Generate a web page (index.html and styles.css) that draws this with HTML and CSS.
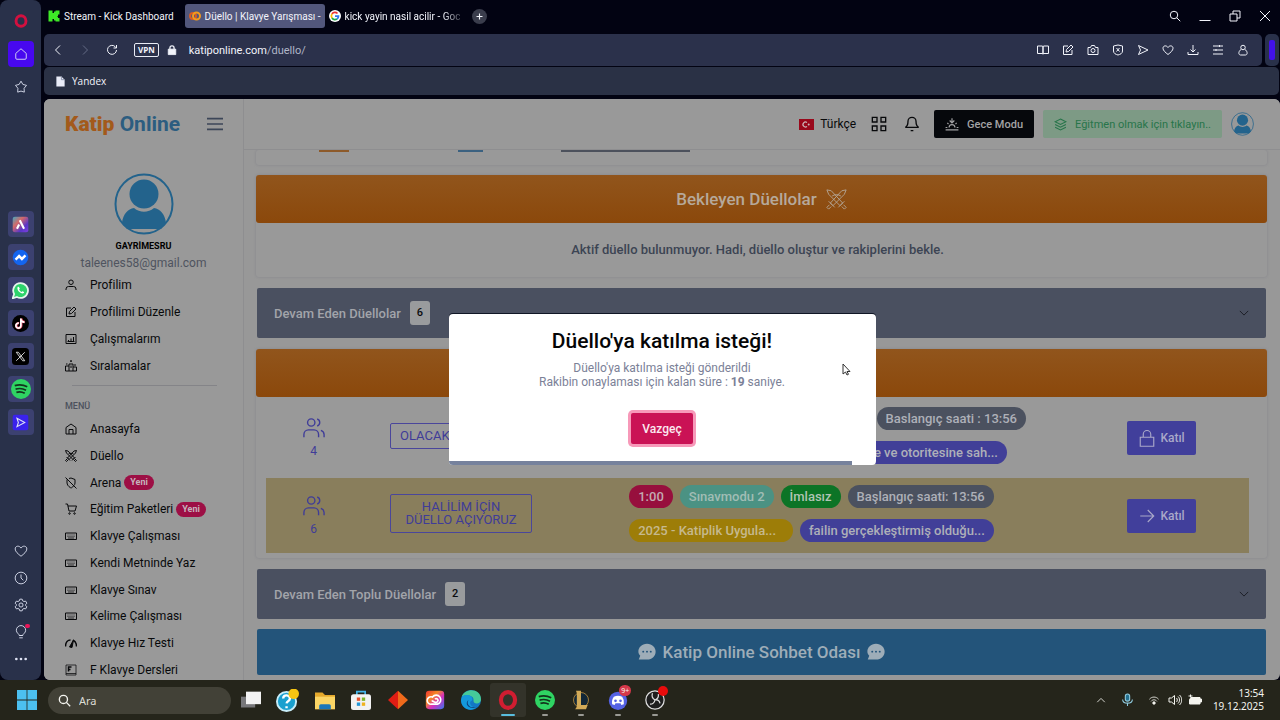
FILE: index.html
```html
<!DOCTYPE html>
<html lang="tr">
<head>
<meta charset="utf-8">
<title>Düello | Klavye Yarışması</title>
<link rel="stylesheet" href="styles.css">
</head>
<body>
<svg class="defs" aria-hidden="true">
<symbol id="home" viewBox="0 0 24 24"><path d="M3 11 12 3l9 8v8a2 2 0 0 1-2 2H5a2 2 0 0 1-2-2z"/></symbol>
<symbol id="house" viewBox="0 0 24 24"><path d="M2 9 12 2l10 7v13H2zM8 22v-9h8v9"/></symbol>
<symbol id="star" viewBox="0 0 24 24"><path d="m12 2 3.200 5.600 6.300 1.600-4.200 5 .4 6.600L12 19l-5.700 1.800.4-6.600-4.200-5 6.300-1.600z"/></symbol>
<symbol id="heart" viewBox="0 0 24 24"><path d="M12 21C7 17 2 13 2 8.500 2 3 9 2 12 7c3-5 10-4 10 1.500C22 13 17 17 12 21z"/></symbol>
<symbol id="clock" viewBox="0 0 24 24"><circle cx="12" cy="12" r="10"/><path d="M12 6v6l4 4"/></symbol>
<symbol id="gear" viewBox="0 0 24 24"><path d="m10 2h4l1 3 2 1 3-.6 2 3.500-2 2.100v2l2 2.100-2 3.500-3-.6-2 1-1 3h-4l-1-3-2-1-3 .6-2-3.500 2-2.100v-2L2 8.900l2-3.500 3 .6 2-1z"/><circle cx="12" cy="12" r="3.500"/></symbol>
<symbol id="bulb" viewBox="0 0 24 24"><path d="M9 18c0-3-5-4-5-9a8 8 0 0 1 16 0c0 5-5 6-5 9zM9 22h6M9 18h6"/></symbol>
<symbol id="left" viewBox="0 0 24 24"><path d="m16 3-9 9 9 9"/></symbol>
<symbol id="right" viewBox="0 0 24 24"><path d="m8 3 9 9-9 9"/></symbol>
<symbol id="down" viewBox="0 0 24 24"><path d="m2 7 10 10L22 7"/></symbol>
<symbol id="up" viewBox="0 0 24 24"><path d="m3 16 9-9 9 9"/></symbol>
<symbol id="reload" viewBox="0 0 24 24"><path d="M21 12a9 9 0 1 1-3-7l3 3M21 2v6h-6"/></symbol>
<symbol id="search" viewBox="0 0 24 24"><circle cx="10" cy="10" r="7.500"/><path d="m15.500 15.500 7 7"/></symbol>
<symbol id="restore" viewBox="0 0 24 24"><path d="M2 8h14v14H2zM8 8V2h14v14h-6"/></symbol>
<symbol id="close" viewBox="0 0 24 24"><path d="m2 2 20 20M22 2 2 22"/></symbol>
<symbol id="book" viewBox="0 0 24 24"><path d="M1 4h9l2 1v15l-2-1H1zM23 4h-9l-2 1v15l2-1h9z"/></symbol>
<symbol id="edit" viewBox="0 0 24 24"><path d="M12 4H3v17h17v-9M8 16l1-5 9-9 4 4-9 9z"/></symbol>
<symbol id="camera" viewBox="0 0 24 24"><path d="M2 7h5l2-4h6l2 4h5v14H2z"/><circle cx="12" cy="13" r="4"/></symbol>
<symbol id="shield" viewBox="0 0 24 24"><path d="M3 4 12 2l9 2v10c0 5-5 7-9 8-4-1-9-3-9-8zM9 8l6 7M15 8l-6 7"/></symbol>
<symbol id="send" viewBox="0 0 24 24"><path d="m3 3 19 9-19 9 4-9z"/></symbol>
<symbol id="download" viewBox="0 0 24 24"><path d="M12 2v14M7 11l5 5 5-5M2 16v5h20v-5"/></symbol>
<symbol id="tune" viewBox="0 0 24 24"><path d="M2 4h20M2 12h20M2 20h20M15 2v4M8 10v4"/></symbol>
<symbol id="person" viewBox="0 0 24 24"><circle cx="12" cy="7" r="4.500"/><path d="M8 11c-6 4-5 11-1 11h10c4 0 5-7-1-11"/></symbol>
<symbol id="user" viewBox="0 0 24 24"><circle cx="12" cy="6.500" r="4.500"/><path d="M2 22v-2a5 5 0 0 1 5-5h10a5 5 0 0 1 5 5v2"/></symbol>
<symbol id="users" viewBox="0 0 24 24"><circle cx="9" cy="6" r="4"/><path d="M1 22v-3a5 5 0 0 1 5-5h6a5 5 0 0 1 5 5v3M15.500 2.200a4 4 0 0 1 0 7.600M19.500 14.500A5 5 0 0 1 23 19v3"/></symbol>
<symbol id="chart" viewBox="0 0 24 24"><path d="M2 3h20v18H2zM7 17v-3M12 17v-6M17 17V8M5 17h14"/></symbol>
<symbol id="podium" viewBox="0 0 24 24"><path d="M1 22V12h7V8h8v6h7v8zM8 12v10M16 14v8M10 2h4M12 1v3M12 11v5M2 8h3M18 10h4"/></symbol>
<symbol id="swords" viewBox="0 0 24 24"><path d="m1 1 5 1 13 14-3 3L3 6zM23 1l-5 1L5 16l3 3L21 6zM3 14l7 7M21 14l-7 7M4 18l-3 3 2 2 3-3M20 18l3 3-2 2-3-3M7 8c3-2 7-2 10 0"/></symbol>
<symbol id="arena" viewBox="0 0 24 24"><path d="m1 1 22 22M8 3l4-1 8 3v7c0 2-1 4-2 5M4 5v7c0 6 8 10 8 10s3-1 5-4"/></symbol>
<symbol id="cart" viewBox="0 0 24 24"><path d="M1 2h4l3 14h12l3-10H6"/><circle cx="9" cy="21" r="1.500"/><circle cx="19" cy="21" r="1.500"/></symbol>
<symbol id="keyboard" viewBox="0 0 24 24"><path d="M1 6h22v13H1z"/><path stroke-width="1.500" d="M5 10h2M9 10h2M13 10h2M17 10h2M5 13h2M9 13h2M13 13h2M17 13h2M6 16h12"/></symbol>
<symbol id="gauge" viewBox="0 0 24 24"><path stroke-width="3" d="M1 19C1 10 6 6 11 6M16 6c4 2 7 6 7 13"/><path d="m9 20 8-14-3 15z" fill="currentColor"/></symbol>
<symbol id="fkey" viewBox="0 0 24 24"><path stroke-width="1.500" d="M2 2h20v20H2zM2 19h20"/><path stroke-width="3" d="M7 15V6h6M7 11h4"/></symbol>
<symbol id="menu" viewBox="0 0 24 24"><path stroke-width="2.500" d="M0 4h24M0 12h24M0 20h24"/></symbol>
<symbol id="grid" viewBox="0 0 24 24"><path d="M2 2h7v7H2zM15 2h7v7h-7zM2 15h7v7H2zM15 15h7v7h-7z"/></symbol>
<symbol id="bell" viewBox="0 0 24 24"><path d="M18 8a6 6 0 0 0-12 0c0 7-4 9-4 9h20s-4-2-4-9M10 22h4"/></symbol>
<symbol id="sunset" viewBox="0 0 24 24"><path d="M17 18a5 5 0 0 0-10 0M12 2v7M8 6l4 4 4-4M4 10l2 2M20 10l-2 2M1 18h3M20 18h3M1 22h22"/></symbol>
<symbol id="layers" viewBox="0 0 24 24"><path d="m12 2 10 5-10 5L2 7zM2 12l10 5 10-5M2 17l10 5 10-5"/></symbol>
<symbol id="avatar" viewBox="0 0 60 62"><ellipse cx="30" cy="31" rx="28.500" ry="29.500" fill="none" stroke="#23638c" stroke-width="2"/><circle cx="30" cy="21" r="14.500" fill="#23638c" stroke="none"/><path d="M8 50c1-9 6-14 12-15 6 5 14 5 20 0 6 1 11 6 12 15l-5 6H13z" fill="#23638c" stroke="none"/></symbol>
<symbol id="lock" viewBox="0 0 24 24"><path d="M3 11h18v12H3zM7 11V7a5 5 0 0 1 10 0v4"/></symbol>
<symbol id="arrow" viewBox="0 0 24 24"><path d="M3 12h18M13 4l8 8-8 8"/></symbol>
<symbol id="chat" viewBox="0 0 24 24"><path d="M12 1c7 0 11.500 5 11.500 10.500S19 22 12 22H1l2-5C1.300 15 .5 13.500.5 11.500.5 6 5 1 12 1z" fill="currentColor" stroke="none"/><g fill="#23547a" stroke="none"><circle cx="7" cy="11.500" r="1.300"/><circle cx="12" cy="11.500" r="1.300"/><circle cx="17" cy="11.500" r="1.300"/></g></symbol>
<symbol id="spotify" viewBox="0 0 24 24"><circle cx="12" cy="12" r="12" fill="#2fd463" stroke="none"/><path d="M4.500 8c5-1.500 10.500-1 15 1.300M5.500 12.200c4-1.200 9-.8 12.500 1.300M6.500 16c3.500-1 7-.6 10 1.200" stroke="#12331c" stroke-width="2"/></symbol>
</svg>

<div class="desktop">
<div class="browser">
  <aside class="dock">
    <div class="dock-group top">
      <button class="dock-item opera" aria-label="Opera"><svg viewBox="0 0 24 24"><ellipse cx="12" cy="12" rx="8.500" ry="9" stroke="#d3103f" stroke-width="5"/></svg></button>
      <button class="dock-item active" aria-label="Ana sayfa"><svg><use href="#home"/></svg></button>
      <button class="dock-item" aria-label="Yıldız"><svg><use href="#star"/></svg></button>
    </div>
    <div class="dock-group apps">
      <button class="dock-item app" aria-label="Aria"><svg viewBox="0 0 24 24"><defs><linearGradient id="aria" x2="1" y2="1"><stop stop-color="#42a8c0"/><stop offset=".35" stop-color="#d56a68"/><stop offset=".7" stop-color="#5a35c8"/><stop offset="1" stop-color="#7d40e0"/></linearGradient></defs><rect x="1" y="1" width="22" height="22" rx="3" fill="url(#aria)" stroke="none"/><path d="m7 18 3-6M11 6l6 12" stroke="#fff" stroke-width="3"/></svg></button>
      <button class="dock-item app" aria-label="Messenger"><svg viewBox="0 0 24 24"><circle cx="12" cy="12" r="11" fill="#1465ef" stroke="none"/><path d="m5 15 5-5 4 4 5-5" stroke="#fff" stroke-width="3.500"/></svg></button>
      <button class="dock-item app" aria-label="WhatsApp"><svg viewBox="0 0 24 24"><path d="M12 1.500a10.500 10.500 0 1 1-5 19.700L1 23l2-6A10.500 10.500 0 0 1 12 1.500z" fill="#2ed36b" stroke="#e6f5ee" stroke-width="2.500"/><path d="M8 7c-2 4 4 10 8 9 2-1 1-2-1-3l-2 1-3-3 1-2c-1-2-2-3-3-2z" fill="#fff" stroke="none"/></svg></button>
      <button class="dock-item app" aria-label="TikTok"><svg viewBox="0 0 24 24"><circle cx="12" cy="12" r="12" fill="#000" stroke="none"/><path d="M13 5v10a3.500 3.500 0 1 1-3-3.500M13 5c0 3 2 5 5 5" stroke="#f34b6a" stroke-width="3.500"/><path d="M12.500 5v10a3.500 3.500 0 1 1-3-3.500M12.500 5c0 3 2 5 5 5" stroke="#fff" stroke-width="2.400"/></svg></button>
      <button class="dock-item app" aria-label="X"><svg viewBox="0 0 24 24"><rect width="24" height="24" rx="5" fill="#000" stroke="none"/><path d="M6 6h3l9 12h-3zM18 6 6 18" stroke="#ddd" stroke-width="1.300"/></svg></button>
      <button class="dock-item app big" aria-label="Spotify"><svg><use href="#spotify"/></svg></button>
      <button class="dock-item app" aria-label="Player"><svg viewBox="0 0 24 24"><rect x="1" y="1" width="22" height="22" rx="3" fill="#3a22ec" stroke="none"/><path d="m7 6 11 6-11 6 2-6z"/></svg></button>
    </div>
    <div class="dock-group bottom">
      <button class="dock-item" aria-label="Favoriler"><svg><use href="#heart"/></svg></button>
      <button class="dock-item" aria-label="Geçmiş"><svg><use href="#clock"/></svg></button>
      <button class="dock-item" aria-label="Ayarlar"><svg><use href="#gear"/></svg></button>
      <button class="dock-item notice" aria-label="İpuçları"><svg><use href="#bulb"/></svg></button>
      <button class="dock-item" aria-label="Daha fazla"><svg viewBox="0 0 24 24"><g fill="currentColor" stroke="none"><circle cx="4" cy="12" r="2.300"/><circle cx="12" cy="12" r="2.300"/><circle cx="20" cy="12" r="2.300"/></g></svg></button>
    </div>
  </aside>

  <div class="window">
    <div class="tabs">
      <button class="tab"><svg viewBox="0 0 24 24"><path d="M1 1h8v5h3V3h3V1h8v8h-3v3h-2v1h2v3h3v7h-8v-2h-3v-3H9v5H1z" fill="#3eea27" stroke="none"/></svg><span>Stream - Kick Dashboard</span></button>
      <button class="tab current"><svg viewBox="0 0 24 24"><g fill="none" stroke-width="4"><circle cx="8" cy="12" r="6" stroke="#d95b24"/><circle cx="15" cy="12" r="7" stroke="#f59b1c"/></g></svg><span>Düello | Klavye Yarışması -</span></button>
      <button class="tab third"><svg viewBox="0 0 24 24"><circle cx="12" cy="12" r="12" fill="#fff" stroke="none"/><g fill="none" stroke-width="3.500"><path d="M6 8a7 7 0 0 1 11-1" stroke="#e33"/><path d="M6 8a7 7 0 0 0 0 8" stroke="#fb0"/><path d="M6 16a7 7 0 0 0 10 2" stroke="#2a4"/><path d="M16 18a7 7 0 0 0 3-6h-7" stroke="#37e"/></g></svg><span>kick yayin nasil acilir - Goc</span></button>
      <button class="newtab" aria-label="Yeni sekme"><svg viewBox="0 0 24 24"><path d="M12 4v16M4 12h16"/></svg></button>
      <div class="wincontrols">
        <button aria-label="Ara"><svg><use href="#search"/></svg></button>
        <button aria-label="Küçült"><svg viewBox="0 0 24 24"><path d="M1 21h22"/></svg></button>
        <button aria-label="Geri yükle"><svg><use href="#restore"/></svg></button>
        <button aria-label="Kapat"><svg><use href="#close"/></svg></button>
      </div>
    </div>
    <div class="toolbar">
      <div class="address">
        <button aria-label="Geri"><svg><use href="#left"/></svg></button>
        <button class="dim" aria-label="İleri"><svg><use href="#right"/></svg></button>
        <button aria-label="Yenile"><svg><use href="#reload"/></svg></button>
        <span class="vpn">VPN</span>
        <svg class="padlock" viewBox="0 0 24 24"><path d="M3 10h18v13H3z" fill="currentColor"/><path d="M7 11V7a5 5 0 0 1 10 0v4" stroke-width="3"/></svg>
        <span class="url">katiponline.com<i>/duello/</i></span>
        <div class="actions">
          <button aria-label="Okuma"><svg><use href="#book"/></svg></button>
          <button aria-label="Düzenle"><svg><use href="#edit"/></svg></button>
          <button aria-label="Ekran görüntüsü"><svg><use href="#camera"/></svg></button>
          <button aria-label="Koruma"><svg><use href="#shield"/></svg></button>
          <button aria-label="Gönder"><svg><use href="#send"/></svg></button>
          <button aria-label="Beğen"><svg><use href="#heart"/></svg></button>
          <button aria-label="İndir"><svg><use href="#download"/></svg></button>
          <button aria-label="Ayarlar"><svg><use href="#tune"/></svg></button>
          <button aria-label="Profil"><svg><use href="#person"/></svg></button>
        </div>
      </div>
      <div class="side-toggle"><b></b></div>
    </div>
    <div class="bookmarks"><a href="#"><svg viewBox="0 0 24 24"><path d="M3 1h11l7 7v15H3z" fill="#e9ecf8" stroke="none"/><path d="M14 1v7h7" stroke="#8890a8"/></svg>Yandex</a></div>

    <div class="page">
      <nav class="sidebar">
        <div class="brand"><a href="#"><b>Katip</b> Online</a><button aria-label="Menü"><svg><use href="#menu"/></svg></button></div>
        <div class="profile"><svg><use href="#avatar"/></svg><strong>GAYRİMESRU</strong><span>taleenes58@gmail.com</span></div>
        <ul class="menu">
          <li><a href="#"><svg><use href="#user"/></svg>Profilim</a></li>
          <li><a href="#"><svg><use href="#edit"/></svg>Profilimi Düzenle</a></li>
          <li><a href="#"><svg><use href="#chart"/></svg>Çalışmalarım</a></li>
          <li><a href="#"><svg><use href="#podium"/></svg>Sıralamalar</a></li>
        </ul>
        <hr>
        <h2>MENÜ</h2>
        <ul class="menu main-menu">
          <li><a href="#"><svg><use href="#house"/></svg>Anasayfa</a></li>
          <li><a href="#"><svg><use href="#swords"/></svg>Düello</a></li>
          <li><a href="#"><svg><use href="#arena"/></svg>Arena<em>Yeni</em></a></li>
          <li><a href="#"><svg><use href="#cart"/></svg>Eğitim Paketleri<em>Yeni</em></a></li>
          <li><a href="#"><svg><use href="#keyboard"/></svg>Klavye Çalışması</a></li>
          <li><a href="#"><svg><use href="#keyboard"/></svg>Kendi Metninde Yaz</a></li>
          <li><a href="#"><svg><use href="#keyboard"/></svg>Klavye Sınav</a></li>
          <li><a href="#"><svg><use href="#keyboard"/></svg>Kelime Çalışması</a></li>
          <li><a href="#"><svg><use href="#gauge"/></svg>Klavye Hız Testi</a></li>
          <li><a href="#"><svg><use href="#fkey"/></svg>F Klavye Dersleri</a></li>
        </ul>
      </nav>

      <div class="main">
        <header class="topbar">
          <button class="lang"><svg viewBox="0 0 15 11"><rect width="15" height="11" fill="#99081b" stroke="none"/><path d="M8 3.500a2.500 2.500 0 1 0 0 4" stroke="#ccb5b8" stroke-width="1.200"/><circle cx="9.700" cy="5.500" r="1" fill="#ccb5b8" stroke="none"/></svg>Türkçe</button>
          <button class="icon" aria-label="Uygulamalar"><svg><use href="#grid"/></svg></button>
          <button class="icon" aria-label="Bildirimler"><svg><use href="#bell"/></svg></button>
          <button class="night"><svg><use href="#sunset"/></svg>Gece Modu</button>
          <button class="teacher"><svg><use href="#layers"/></svg>Eğitmen olmak için tıklayın..</button>
          <button class="me" aria-label="Hesap"><svg><use href="#avatar"/></svg></button>
        </header>
        <div class="content">
          <section class="card stub"><i class="orange"></i><i class="blue"></i><i class="grey"></i></section>
          <section class="card">
            <h3 class="bar orange">Bekleyen Düellolar<svg><use href="#swords"/></svg></h3>
            <p>Aktif düello bulunmuyor. Hadi, düello oluştur ve rakiplerini bekle.</p>
          </section>
          <button class="fold">Devam Eden Düellolar<span>6</span><svg><use href="#down"/></svg></button>
          <section class="card">
            <h3 class="bar orange"></h3>
            <div class="rows">
              <div class="duel">
                <div class="count"><svg><use href="#users"/></svg>4</div>
                <div class="name"><div class="title cut">OLACAK</div></div>
                <div class="tags cut">
                  <div class="line first"><span class="tag slate">Baslangıç saati : 13:56</span></div>
                  <div class="line second"><span class="tag indigo">e ve otoritesine sah...</span></div>
                </div>
                <div><button class="join"><svg><use href="#lock"/></svg>Katıl</button></div>
              </div>
              <div class="duel gold">
                <div class="count"><svg><use href="#users"/></svg>6</div>
                <div class="name"><div class="title">HALİLİM İÇİN<br>DÜELLO AÇIYORUZ</div></div>
                <div class="tags">
                  <div class="line"><span class="tag red">1:00</span><span class="tag teal">Sınavmodu 2</span><span class="tag green">İmlasız</span><span class="tag slate">Başlangıç saati: 13:56</span></div>
                  <div class="line"><span class="tag yellow">2025 - Katiplik Uygula...</span><span class="tag indigo">failin gerçekleştirmiş olduğu...</span></div>
                </div>
                <div><button class="join"><svg><use href="#arrow"/></svg>Katıl</button></div>
              </div>
            </div>
          </section>
          <button class="fold">Devam Eden Toplu Düellolar<span>2</span><svg><use href="#down"/></svg></button>
          <h3 class="bar chatbar"><svg><use href="#chat"/></svg>Katip Online Sohbet Odası<svg><use href="#chat"/></svg></h3>
        </div>
      </div>

      <div class="overlay">
        <div class="modal" role="dialog" aria-labelledby="modal-title">
          <h1 id="modal-title">Düello'ya katılma isteği!</h1>
          <p>Düello'ya katılma isteği gönderildi<br>Rakibin onaylaması için kalan süre : <b>19</b> saniye.</p>
          <button>Vazgeç</button>
          <div class="progress"><i></i></div>
          <svg class="cursor" viewBox="0 0 9 13"><path d="M1 1v10l2.500-2 1.500 3 1.500-.7L5 8.500h3z" fill="#fff" stroke="#333" stroke-width="1"/></svg>
        </div>
      </div>
    </div>
  </div>
</div>

<footer class="taskbar">
  <button class="start" aria-label="Başlat"><svg viewBox="0 0 24 24"><path d="M0 0h11.500v11.500H0zM12.500 0H24v11.500H12.500zM0 12.500h11.500V24H0zM12.500 12.500H24V24H12.500z" fill="#4cc0f0" stroke="none"/></svg></button>
  <label class="find"><svg><use href="#search"/></svg><input type="text" placeholder="Ara" aria-label="Ara"></label>
  <div class="pins">
    <button aria-label="Görev görünümü"><svg viewBox="0 0 24 24"><rect x="0" y="8" width="17" height="13" fill="#77777a" stroke="none"/><rect x="6" y="2" width="18" height="15" fill="#f3f3f3" stroke="none"/></svg></button>
    <button aria-label="Yardım"><svg class="help" viewBox="0 0 24 24"><circle cx="11" cy="13" r="10" fill="#1aa0cf" stroke="#c8edf9" stroke-width="2"/><path d="M7.500 10c0-5 7-4 7 0 0 3-3 2-3.500 5M11 18v2" stroke="#fff" stroke-width="2.500"/><circle cx="18.500" cy="5" r="5.500" fill="#f6c512" stroke="none"/></svg></button>
    <button aria-label="Dosya Gezgini"><svg viewBox="0 0 24 24"><path d="M0 3h9l3 3h12v17H0z" fill="#e5a92c" stroke="none"/><path d="M0 8h24v15H0z" fill="#fbd565" stroke="none"/><path d="M5 23v-4q0-2 2-2h10q2 0 2 2v4z" fill="#1c76b9" stroke="none"/></svg></button>
    <button aria-label="Mağaza"><svg viewBox="0 0 24 24"><path d="M7 7V2h10v5" stroke="#43b5ea"/><rect x="0" y="5" width="24" height="19" rx="3" fill="#f2f2f2" stroke="none"/><path d="M7 9h4v4H7z" fill="#e8502c" stroke="none"/><path d="M13 9h4v4h-4z" fill="#7bb52a" stroke="none"/><path d="M7 15h4v4H7z" fill="#2497d8" stroke="none"/><path d="M13 15h4v4h-4z" fill="#efb21d" stroke="none"/></svg></button>
    <button aria-label="Uygulama"><svg viewBox="0 0 24 24"><path d="M12 1 0 12l12 11z" fill="#df1d14" stroke="none"/><path d="M12 1 24 12 12 23z" fill="#ef6a1b" stroke="none"/></svg></button>
    <button aria-label="Creative Cloud"><svg viewBox="0 0 24 24"><defs><linearGradient id="cc" x2="1" y2="1"><stop stop-color="#e33"/><stop offset=".35" stop-color="#f58a24"/><stop offset=".6" stop-color="#d72fbf"/><stop offset="1" stop-color="#3278ee"/></linearGradient></defs><rect x="1" y="1" width="22" height="22" rx="4" fill="url(#cc)" stroke="none"/><path d="M8 17a4.500 4.500 0 1 1 1-8.500 5.500 5.500 0 1 1 6 8.500zM8 13c3 0 4 4 7 1a2 2 0 0 0-3-3" stroke="#fff"/></svg></button>
    <button aria-label="Edge"><svg viewBox="0 0 24 24"><circle cx="12" cy="12" r="12" fill="#1378c4" stroke="none"/><path d="M1 8C5-3 24-2 24 11c0 6-9 7-9 2 1-7-9-8-14-5z" fill="#45ca9a" stroke="none"/><path d="M1 8c7-5 15 0 12 5-4 1-2 8 5 8-7 6-18 1-18-9z" fill="#1499db" stroke="none"/><path d="M9 12c-3 4 1 11 10 8-8 5-16-3-10-8z" fill="#0c3d78" stroke="none"/></svg></button>
    <button class="running open" aria-label="Opera"><svg viewBox="0 0 24 24"><ellipse cx="12" cy="12" rx="8.500" ry="9.500" stroke="#d01d31" stroke-width="5"/></svg></button>
    <button class="running" aria-label="Spotify"><svg><use href="#spotify"/></svg></button>
    <button class="running" aria-label="League of Legends"><svg viewBox="0 0 24 24"><circle cx="12" cy="12" r="9" fill="#122737" stroke="#b98d3f" stroke-width="1"/><path d="M6 1h6v17h8l-2 5H5l2-3V4z" fill="#d2aa58" stroke="none"/></svg></button>
    <button class="running" aria-label="Discord"><svg viewBox="0 0 24 24"><circle cx="12" cy="13" r="11" fill="#5562e4" stroke="none"/><path d="M7 8q5-2 10 0 3 4 2 9l-3 1-1-2H9l-1 2-3-1q-1-5 2-9z" fill="#fff" stroke="none"/><g fill="#5562e4" stroke="none"><circle cx="9" cy="13" r="1.600"/><circle cx="15" cy="13" r="1.600"/></g></svg><small>9+</small></button>
    <button class="running rec" aria-label="OBS"><svg viewBox="0 0 24 24"><circle cx="12" cy="12" r="11" fill="#1e1e1e" stroke="#ddd" stroke-width="1.500"/><path d="M9 4q-2 5 3 8 5-1 6 4M12 12q-1 5-6 5M12 12q5-2 4-7" stroke="#ddd" stroke-width="1.500"/></svg></button>
  </div>
  <div class="tray">
    <svg><use href="#up"/></svg>
    <svg class="mic" viewBox="0 0 24 24"><rect x="8" y="1" width="8" height="13" rx="4" fill="#24708f"/><path d="M3 11c0 9 18 9 18 0M12 18v5"/></svg>
    <svg viewBox="0 0 24 24"><path d="M1 9c6-7 16-7 22 0M5 14c4-5 10-5 14 0"/><circle cx="12" cy="18" r="3" fill="currentColor"/></svg>
    <svg class="wide" viewBox="0 0 28 24"><path d="M2 8h5l6-5v18l-6-5H2zM17 8c2 2 2 6 0 8M20 5c4 4 4 10 0 14M23 2c6 6 6 14 0 20"/></svg>
    <svg class="wide" viewBox="0 0 28 24"><path d="M6 7h18v3h3v6h-3v4H3V11z" fill="currentColor"/><path d="M5 1v6M1 4h8"/></svg>
    <time>13:54<br>19.12.2025</time>
  </div>
</footer>
</div>
</body>
</html>
```
FILE: styles.css
```css
* { box-sizing: border-box; }
body { margin: 0; background: #020312; font-family: Roboto, sans-serif; font-size: 13px; color: #08090b; }
button { font: inherit; color: inherit; background: none; border: 0; padding: 0; display: flex; align-items: center; justify-content: center; cursor: pointer; }
a { color: inherit; text-decoration: none; }
h1, h2, h3, p, ul { margin: 0; padding: 0; }
svg { width: 14px; height: 14px; flex: none; display: block; fill: none; stroke: currentColor; stroke-width: 2; }
.defs { position: absolute; width: 0; height: 0; }

.desktop { height: 100vh; display: flex; flex-direction: column; }
.browser { flex: 1; min-height: 0; display: flex; gap: 3px; }

/* Opera dock */
.dock { width: 41px; flex: none; background: #29314a; border-radius: 8px; display: flex; flex-direction: column; align-items: center; padding: 8px 0 8px; color: #dfe3f4; }
.dock-group { display: flex; flex-direction: column; gap: 7px; }
.dock-group.apps { margin-top: 111px; }
.dock-group.bottom { margin-top: auto; gap: 1px; }
.dock-item { width: 26px; height: 26px; border-radius: 4px; position: relative; }
.dock-item svg { stroke-width: 1.500; }
.dock-item.active { background: #4708ef; }
.dock-item.app { background: #3c4170; }
.app svg { width: 17px; height: 17px; }
.app.big svg { width: 20px; height: 20px; }
.notice::after { content: ""; position: absolute; top: 5px; right: 4px; width: 5px; height: 4px; border-radius: 2px; background: #ea1659; }

/* Browser chrome */
.window { flex: 1; min-width: 0; display: flex; flex-direction: column; color: #f2f4fb; font-family: "Open Sans", sans-serif; font-size: 10px; }
.tabs { height: 34px; display: flex; align-items: center; padding: 0 9px 2px 4px; font-family: Roboto, sans-serif; }
.tab { height: 24px; gap: 4px; border-radius: 3px; white-space: nowrap; min-width: 125px; justify-content: flex-start; }
.tab svg { width: 12px; height: 12px; }
.tab.current { background: #52577c; min-width: 140px; margin-left: 11px; padding: 0 4px; }
.tab.third { margin-left: 4px; min-width: 132px; }
.tab.third span { mask-image: linear-gradient(90deg, #000 85%, #0004); }
.newtab { width: 15px; height: 15px; border-radius: 50%; background: #3a3d4c; margin-left: 11px; }
.newtab svg { width: 9px; height: 9px; stroke-width: 3; }
.wincontrols { margin-left: auto; display: flex; gap: 18px; }
.wincontrols svg { width: 12px; height: 12px; }
.toolbar { display: flex; gap: 3px; height: 32px; }
.address { flex: 1; background: #2b314b; border-radius: 5px; display: flex; align-items: center; padding: 0 12px 0 7px; }
.address > button { width: 14px; margin-right: 13px; }
.address svg { width: 12px; height: 12px; }
.address .dim { color: #646b86; }
.vpn { border: 1px solid #e8ebf5; border-radius: 2px; font-size: 8px; font-weight: bold; line-height: 12px; padding: 0 3px; margin-left: 2px; }
.address .padlock { width: 10px; margin: 0 12px 0 8px; }
.url { font-family: Roboto, sans-serif; font-size: 11px; }
.url i { font-style: normal; color: #b0b6c8; }
.actions { margin-left: auto; display: flex; gap: 11px; }
.actions button { width: 14px; }
.side-toggle { width: 14px; margin-right: 1px; border-radius: 5px; background: #29314a; display: flex; align-items: center; justify-content: center; }
.side-toggle b { width: 6px; height: 20px; border-radius: 2px; background: #4212ea; }
.bookmarks { height: 28px; margin: 1px 1px 4px 0; background: #2a3145; border-radius: 5px; display: flex; align-items: center; padding-left: 11px; }
.bookmarks a { display: flex; align-items: center; gap: 6px; }
.bookmarks svg { width: 11px; height: 13px; }

/* Site */
.page { flex: 1; min-height: 0; position: relative; display: flex; background: #989898; border-radius: 6px; overflow: hidden; font-family: Roboto, sans-serif; font-size: 13px; color: #08090b; }
.sidebar { width: 200px; flex: none; display: flex; flex-direction: column; border-right: 1px solid #8e8e90; background: #999; }
.brand { display: flex; align-items: center; justify-content: space-between; padding: 0 20px 0 21px; height: 50px; margin-bottom: 1px; flex: none; font-size: 21px; font-weight: 700; color: #2c5d80; }
.brand b { color: #a35a1b; }
.brand svg { width: 16px; height: 16px; color: #3c4658; }
.profile { display: flex; flex-direction: column; align-items: center; padding-top: 23px; flex: none; }
.profile svg { width: 60px; height: 62px; }
.profile strong { font-size: 9px; line-height: 12px; margin-top: 5px; color: #000; }
.profile span { color: #4f545f; line-height: 16px; margin-top: 3px; font-size: 12px; }
.menu { list-style: none; display: flex; flex-direction: column; padding: 0 0 0 21px; flex: none; font-size: 12px; }
.menu a { display: flex; align-items: center; height: 27px; }
.menu svg { width: 12px; height: 12px; margin-right: 13px; }
.menu em { font-style: normal; font-size: 9px; font-weight: 700; line-height: 15px; padding: 0 6px; border-radius: 8px; background: #9d0f45; color: #c6b4bd; margin-left: 3px; }
.sidebar hr { border: 0; border-top: 1px solid #848488; margin: 6px 26px 0 28px; }
.sidebar h2 { font-size: 9px; font-weight: 500; line-height: 14px; color: #4c515d; margin: 13px 0 3px 21px; }
.main-menu { flex: 1 1 0; min-height: 0; justify-content: space-between; margin-bottom: -3px; }
.main-menu a { height: 26px; }
.main { flex: 1; min-width: 0; display: flex; flex-direction: column; }
.topbar { height: 51px; flex: none; display: flex; align-items: center; justify-content: flex-end; padding-right: 26px; background: #999; border-bottom: 1px solid #8e8e90; font-size: 12px; }
.topbar .lang { gap: 6px; margin-right: 15px; }
.lang svg { width: 15px; height: 11px; }
.topbar .icon { margin-right: 17px; }
.topbar .icon svg { width: 16px; height: 16px; }
.night, .teacher { height: 28px; border-radius: 2px; gap: 8px; padding: 0 11px; font-size: 11px; }
.night { background: #06080c; color: #a3a3a5; margin-left: -3px; font-weight: 500; }
.teacher { background: #7d9a85; color: #27754a; margin: 0 9px; }
.teacher svg { width: 13px; height: 13px; }
.me svg { width: 23px; height: 24px; }
.content { flex: 1; min-height: 0; overflow: hidden; padding: 0 13px 0 12px; display: flex; flex-direction: column; gap: 11px; }
.card { flex: none; border-radius: 3px; background: #999; box-shadow: 0 0 3px #85858b; }
.card.stub { height: 15px; display: flex; margin-bottom: -1px; padding-left: 63px; }
.stub i { height: 2px; }
.stub .orange { width: 30px; background: #8d5a2a; }
.stub .blue { width: 25px; margin-left: 109px; background: #3b6180; }
.stub .grey { width: 129px; margin-left: 78px; background: #4c515c; }
.bar { height: 48px; display: flex; align-items: center; justify-content: center; gap: 9px; border-radius: 3px; font-size: 17px; font-weight: 500; color: #b6a99b; }
.bar svg { width: 21px; height: 21px; stroke-width: 1; }
.bar.orange { background: linear-gradient(#91551c, #8b480b); }
.card p { text-align: center; line-height: 54px; font-size: 13px; font-weight: 500; color: #3c4453; padding-right: 8px; }
.fold { flex: none; height: 50px; margin: 0 1px; padding: 0 17px; justify-content: flex-start; background: #4a5060; border-radius: 2px; font-weight: 500; color: #a2a4aa; }
.fold span { margin-left: 9px; width: 20px; line-height: 24px; font-size: 11px; border-radius: 3px; background: #999b9d; color: #0b0c0f; text-align: center; }
.fold svg { width: 10px; height: 10px; margin-left: auto; color: #14161c; }
.rows { padding: 2px 18px 5px 10px; }
.duel { display: grid; grid-template-columns: 95fr 200fr 513fr 175fr; align-items: center; justify-items: center; min-height: 77px; margin-bottom: 2px; }
.duel.gold { background: #897e5c; min-height: 75px; margin-bottom: 0; }
.count { color: #3f3c98; text-align: center; font-size: 12px; line-height: 16px; }
.count svg { width: 22px; height: 22px; margin-bottom: 4px; stroke-width: 1.500; }
.name { padding-bottom: 4px; }
.title { width: 142px; border: 1px solid #4a469b; border-radius: 2px; text-align: center; color: #3f3c98; font-size: 13px; line-height: 13px; padding: 5px 0 6px; }
.title.cut { text-align: left; padding-left: 9px; }
.tags { display: flex; flex-direction: column; gap: 11px; padding: 0 12px 4px 0; }
.tags.cut { justify-self: stretch; padding-right: 0; }
.line { display: flex; gap: 7px; justify-content: center; }
.line.first { justify-content: flex-end; padding-right: 48px; }
.line.second { justify-content: flex-end; padding-right: 67px; }
.tag { line-height: 23px; padding: 0 9px; border-radius: 12px; font-weight: 500; white-space: nowrap; color: #aeb0b8; }
.slate { background: #4b515f; }
.indigo { background: #413f98; }
.red { background: #970f3d; color: #c4aab2; }
.teal { background: #4b9283; color: #a1bdb5; }
.green { background: #0c7426; color: #b0c5b4; }
.yellow { background: #9d7d08; color: #c6b98e; padding-right: 17px; }
.join { width: 69px; height: 34px; gap: 4px; border-radius: 2px; background: #413f9b; color: #aaa9c9; font-size: 12px; font-weight: 500; }
.join svg { width: 18px; height: 18px; stroke-width: 1.500; }
.chatbar { flex: none; height: 46px; margin: -1px 1px 0; background: #23547a; color: #9eadb8; gap: 7px; border-radius: 2px; }
.chatbar svg { width: 18px; height: 18px; }

/* Dialog */
.overlay { position: absolute; inset: 0; display: flex; align-items: center; justify-content: center; }
.modal { position: relative; width: 427px; background: #fff; border-radius: 4px; display: flex; flex-direction: column; align-items: center; padding-top: 14px; box-shadow: 0 -1px 0 #101625; }
.modal h1 { font-size: 21px; font-weight: 500; line-height: 26px; color: #050506; }
.modal p { margin-top: 7px; text-align: center; font-size: 12px; line-height: 14px; color: #7b8197; }
.modal button { margin-top: 24px; height: 31px; padding: 0 11px; border-radius: 2px; background: #ca1255; color: #fbe7ef; font-size: 12px; font-weight: 500; box-shadow: 0 0 0 3px #f799b9; }
.progress { align-self: stretch; margin-top: 17px; height: 4px; border-radius: 0 0 4px 4px; overflow: hidden; }
.progress i { display: block; width: 403px; height: 4px; background: #76829d; }
.modal .cursor { position: absolute; left: 393px; top: 49px; width: 9px; height: 13px; }

/* Taskbar */
.taskbar { height: 40px; flex: none; background: #25251b; display: flex; align-items: center; padding: 0 16px 0 17px; color: #f4f4ef; font-family: "Noto Sans", sans-serif; font-size: 11px; }
.start svg { width: 20px; height: 20px; }
.find { width: 183px; height: 27px; margin-left: 11px; border-radius: 14px; background: #424137; display: flex; align-items: center; gap: 8px; padding: 0 10px; }
.find svg { width: 13px; height: 13px; stroke-width: 2.500; }
.find input { flex: 1; min-width: 0; border: 0; padding: 0; background: none; outline: 0; font: inherit; color: #ddd; }
.find input::placeholder { color: #dcdcd5; opacity: 1; }
.pins { display: grid; grid-template-columns: repeat(12, 1fr); width: 440px; margin-left: 2px; }
.pins button { height: 34px; border-radius: 3px; position: relative; }
.pins svg { width: 20px; height: 20px; }
.pins .help { width: 23px; height: 23px; }
.pins .open { background: #33332a; }
.running::after { content: ""; position: absolute; bottom: 1px; left: 50%; margin-left: -3px; width: 6px; height: 2px; border-radius: 1px; background: #9a9a94; }
.running.open::after { width: 14px; margin-left: -7px; background: #59bdde; }
.pins small { position: absolute; right: 5px; top: 2px; width: 12px; line-height: 11px; border-radius: 6px; background: #d5384a; font-size: 7px; }
.rec::before { content: ""; position: absolute; top: 3px; right: 5px; width: 10px; height: 10px; border-radius: 50%; background: #e80c0c; z-index: 1; }
.tray { margin-left: auto; display: flex; align-items: center; }
.tray svg { width: 10px; height: 11px; margin-right: 9px; }
.tray svg:first-child { margin-right: 15px; }
.tray svg.mic { width: 13px; height: 14px; margin-right: 15px; color: #8fcade; }
.tray svg.wide { width: 14px; height: 12px; margin-right: 6px; }
.tray time { font-size: 10px; line-height: 13px; text-align: right; min-width: 56px; }
```
